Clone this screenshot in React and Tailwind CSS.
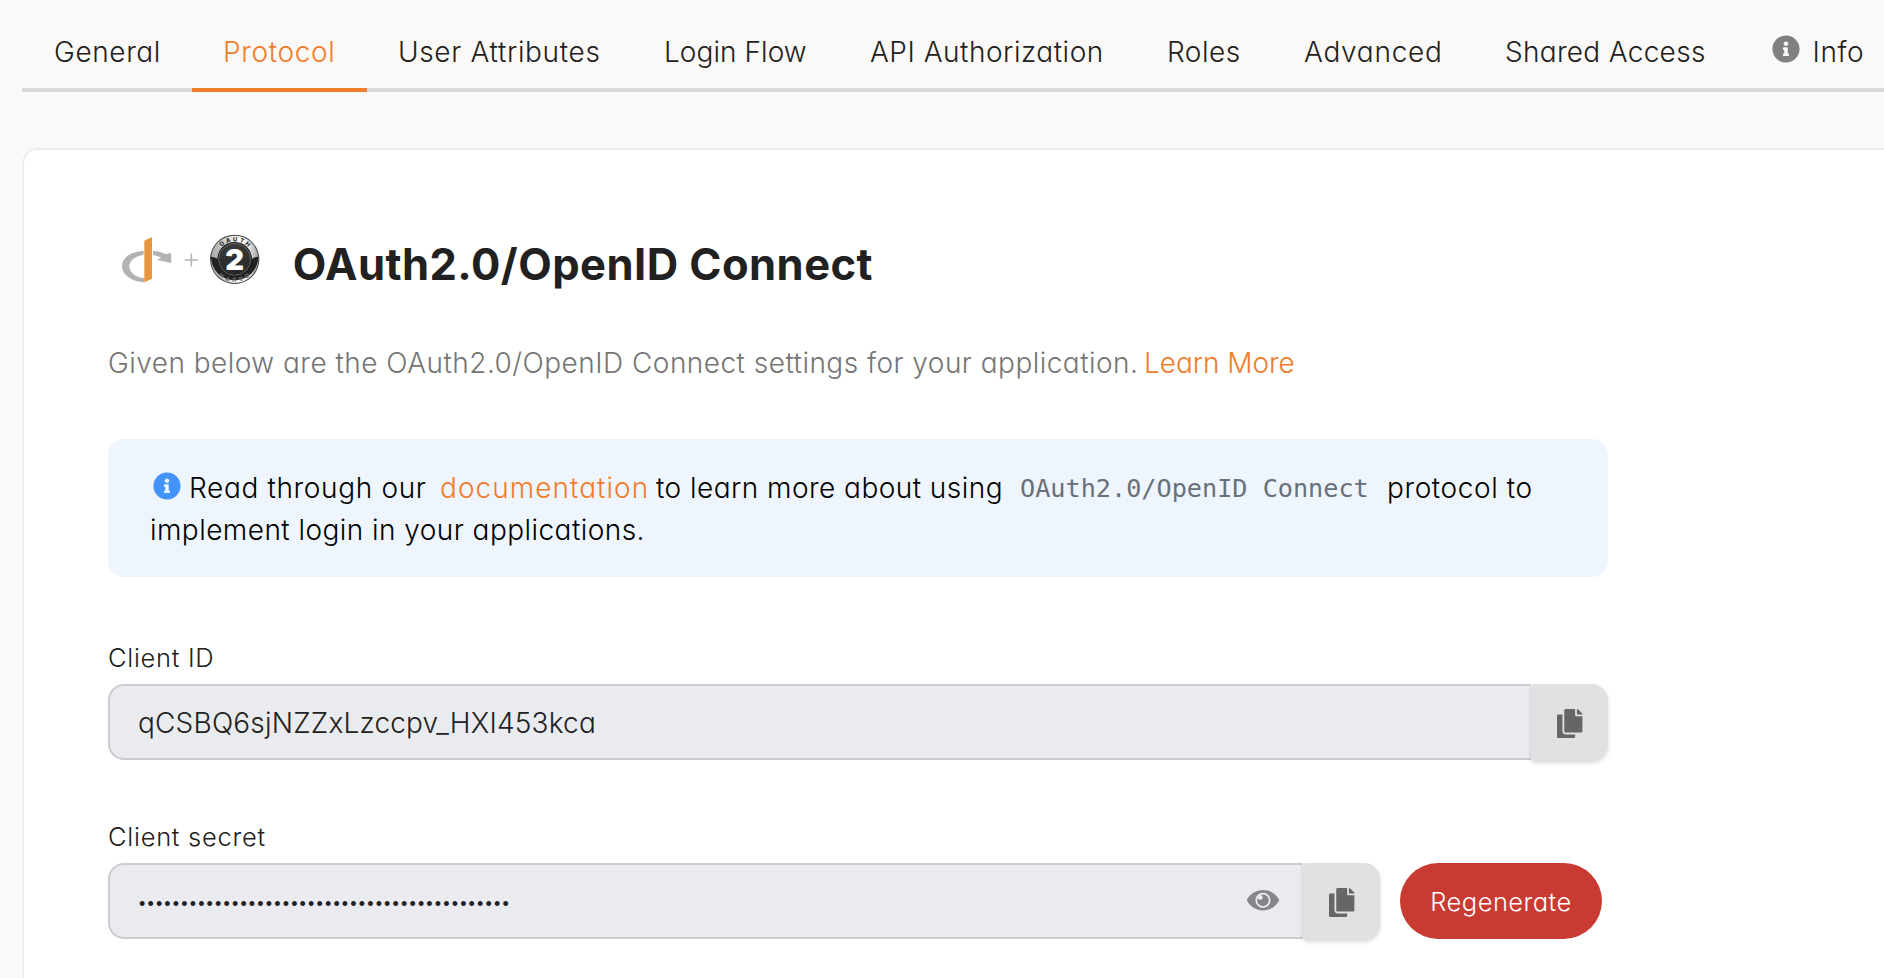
import { FaCopy, FaInfoCircle } from "react-icons/fa";

const tabs = [
  { label: "General", box: "w-[170px] pl-[32px] tracking-[0.6px]" },
  { label: "Protocol", box: "w-[175px] pl-[31px] tracking-[0.65px]", active: true },
  { label: "User Attributes", box: "w-[266px] pl-[31px] tracking-[0.65px]" },
  { label: "Login Flow", box: "w-[205px] pl-[31px] tracking-[0.06px]" },
  { label: "API Authorization", box: "w-[298px] pl-[32px] tracking-[0.52px]" },
  { label: "Roles", box: "w-[137px] pl-[31px] tracking-[0.47px]" },
  { label: "Advanced", box: "w-[201px] pl-[31px] tracking-[0.72px]" },
  { label: "Shared Access", box: "w-[234px] pl-[31px] tracking-[0.3px]" },
];

function Tabs() {
  return (
    <nav className="ml-[22px] flex h-[92px] text-[28px] leading-[74px] text-[#212121]">
      {tabs.map((t) => (
        <a
          key={t.label}
          className={`shrink-0 whitespace-nowrap border-b-4 pt-[15px] ${t.box} ${
            t.active ? "border-[#f07c2e] text-[#f07c2e]" : "border-[#d9d9d9]"
          }`}
        >
          {t.label}
        </a>
      ))}
      <a className="flex grow whitespace-nowrap border-b-4 border-[#d9d9d9] pt-[15px] pl-[64px] tracking-[0.6px]">
        <FaInfoCircle className="mt-[20px] size-7 text-[#808080]" />
        <span className="pl-[12.5px]">Info</span>
      </a>
    </nav>
  );
}

function Logos() {
  return (
    <svg viewBox="60 36 430 160" className="-mt-0.5 h-[53.33px] w-[143.33px]" aria-hidden="true">
      <defs>
        <linearGradient id="rim" x1="0" y1="0.3" x2="1" y2="0.3">
          <stop offset="0" stopColor="#a8a8a8" />
          <stop offset="0.25" stopColor="#c9c9c9" />
          <stop offset="0.6" stopColor="#ffffff" />
          <stop offset="0.8" stopColor="#e8e8e8" />
          <stop offset="1" stopColor="#a0a0a0" />
        </linearGradient>
        <linearGradient id="core" x1="0" y1="0" x2="0" y2="1">
          <stop offset="0" stopColor="#2e2e2e" />
          <stop offset="1" stopColor="#131313" />
        </linearGradient>
        <pattern id="weave" width="6" height="6" patternUnits="userSpaceOnUse" patternTransform="rotate(35)">
          <rect width="6" height="2.5" fill="#6a6a6a" opacity="0.5" />
        </pattern>
        <path id="arcTop" d="M350 118a54 54 0 0 1 108 0" />
        <path id="arcBottom" d="M459 118a55 55 0 0 1-110 0" />
      </defs>
      <path
        d="M131 92C92 95 66 113 66 139c0 27 29 46 67 48v-12c-26-3-45-17-45-36 0-18 18-31 43-35z"
        fill="#b3b3b3"
      />
      <path d="M159 92c15 2 28 5 39 11l15-5 1 31-43-9 12-7c-7-4-15-6-24-8z" fill="#b3b3b3" />
      <path d="M133 62l23-11v125l-23 11z" fill="#e8963e" />
      <path d="M256 120h36M274 102v36" stroke="#b3b3b3" strokeWidth="5" strokeLinecap="round" />
      <circle cx="404" cy="118" r="74" fill="#444444" />
      <circle cx="404" cy="118" r="71" fill="url(#rim)" />
      <path d="M333 110c12 1 20 5 24 13h94c4-8 12-12 24-13a71 71 0 1 1-142 0z" fill="#222222" />
      <circle cx="404" cy="118" r="52" fill="#1c1c1c" />
      <circle cx="404" cy="118" r="48" fill="url(#core)" stroke="#6f6f6f" strokeWidth="2.5" />
      <circle cx="404" cy="118" r="48" fill="url(#weave)" />
      <text fill="#333333" fontFamily="Inter, sans-serif" fontWeight="800" fontSize="18" letterSpacing="6" textAnchor="middle">
        <textPath href="#arcTop" startOffset="52%">OAUTH</textPath>
      </text>
      <text fill="#686868" fontFamily="Inter, sans-serif" fontWeight="800" fontSize="17" letterSpacing="6" textAnchor="middle">
        <textPath href="#arcBottom" startOffset="52%">OAUTH</textPath>
      </text>
      <text x="404" y="150" fill="#ffffff" fontFamily="Inter, sans-serif" fontWeight="900" fontSize="87" textAnchor="middle">
        2
      </text>
    </svg>
  );
}

function EyeIcon() {
  return (
    <svg viewBox="0 0 576 512" fill="currentColor" className="mb-0.5 h-[28.4px] w-8 text-[#858689]">
      <path d="M569.354 231.631C512.969 135.949 407.81 72 288 72 168.14 72 63.004 135.994 6.646 231.631a47.999 47.999 0 0 0 0 48.739C63.031 376.051 168.19 440 288 440c119.86 0 224.996-63.994 281.354-159.631a47.997 47.997 0 0 0 0-48.738zM288 392c-75.162 0-136-60.827-136-136 0-75.162 60.826-136 136-136 75.162 0 136 60.826 136 136 0 75.162-60.826 136-136 136zm104-136c0 57.438-46.562 104-104 104s-104-46.562-104-104c0-17.708 4.431-34.379 12.236-48.973l-.001.032c0 23.651 19.173 42.823 42.824 42.823s42.824-19.173 42.824-42.823c0-23.651-19.173-42.824-42.824-42.824l-.032.001C253.621 156.431 270.292 152 288 152c57.438 0 104 46.562 104 104z" />
    </svg>
  );
}

function CopyButton() {
  return (
    <button className="flex h-[77px] w-[77.5px] items-center justify-center rounded-l-[4px] rounded-r-2xl bg-[#dfe1e2] pt-px pl-[1.5px] text-[#666666] shadow-[0_2px_4px_rgba(0,0,0,0.15)]">
      <FaCopy className="h-[29px] w-[25.4px]" />
    </button>
  );
}

export default function App() {
  return (
    <div className="flex h-[978px] flex-col overflow-hidden bg-[#faf9f7] font-[Inter,sans-serif] font-light [font-feature-settings:'cv11']">
      <Tabs />
      <main className="mt-14 -mr-5 ml-[22px] h-[900px] shrink-0 rounded-2xl border-2 border-[#eceff1] bg-white pl-[84px] text-[#212121]">
        <header className="mt-[84px] flex h-[60px] pl-3">
          <Logos />
          <h1 className="ml-[29.5px] whitespace-nowrap text-[43.5px] leading-[60px] font-bold tracking-[0.46px]">
            OAuth2.0/OpenID Connect
          </h1>
        </header>
        <p className="mt-[48px] flex text-[28px] leading-[42px] whitespace-nowrap text-[#757575]">
          <span className="w-[1036px] tracking-[0.47px]">
            Given below are the OAuth2.0/OpenID Connect settings for your application.
          </span>
          <a className="tracking-[-0.05px] text-[#f07c2e]">Learn More</a>
        </p>
        <section className="mt-[55px] h-[138px] w-[1500px] rounded-2xl bg-[#eef5fc] pt-[28px] pl-[42px] text-[28px] leading-[42px] whitespace-nowrap text-black">
          <div className="flex">
            <span className="w-[39px] pt-[5px] pl-[2.5px]">
              <FaInfoCircle className="size-7 text-[#4294fb]" />
            </span>
            <span className="w-[251px] tracking-[0.65px]">Read through our</span>
            <a className="w-[216px] tracking-[1.04px] text-[#f07c2e]">documentation</a>
            <span className="w-[364px] tracking-[0.46px]">to learn more about using</span>
            <code className="w-[367px] pt-px font-['DejaVu_Sans_Mono',monospace] text-[25.2px] text-[#69707a]">
              OAuth2.0/OpenID Connect
            </code>
            <span className="tracking-[0.6px]">protocol to</span>
          </div>
          <div className="-mt-px tracking-[0.45px]">implement login in your applications.</div>
        </section>
        <label className="mt-[63px] block text-[25.5px] leading-[36px] tracking-[0.7px]">Client ID</label>
        <div className="mt-[8px] flex w-[1500px]">
          <div className="flex h-[76px] grow items-center rounded-l-2xl border-2 border-r-0 border-[#cbccd1] bg-[#eaebef] pt-0.5 pl-7 text-[28px] tracking-[0.19px]">
            qCSBQ6sjNZZxLzccpv_HXI453kca
          </div>
          <CopyButton />
        </div>
        <label className="mt-[58px] block text-[25.5px] leading-[36px] tracking-[0.72px]">Client secret</label>
        <div className="mt-2 flex w-[1500px]">
          <div className="flex h-[76px] w-[1194.5px] items-center justify-between rounded-l-2xl border-2 border-r-0 border-[#cbccd1] bg-[#eaebef] pr-[23.5px] pl-[29px]">
            <span className="pt-[7px] font-['Liberation_Sans',sans-serif] text-[18px] tracking-[2.15px]">
              ••••••••••••••••••••••••••••••••••••••••••••
            </span>
            <EyeIcon />
          </div>
          <CopyButton />
          <button className="ml-5 flex h-[76px] w-[202px] items-center justify-center rounded-full bg-[#c93a32] pt-0.5 text-[25.5px] tracking-[0.45px] text-white">
            Regenerate
          </button>
        </div>
      </main>
    </div>
  );
}
